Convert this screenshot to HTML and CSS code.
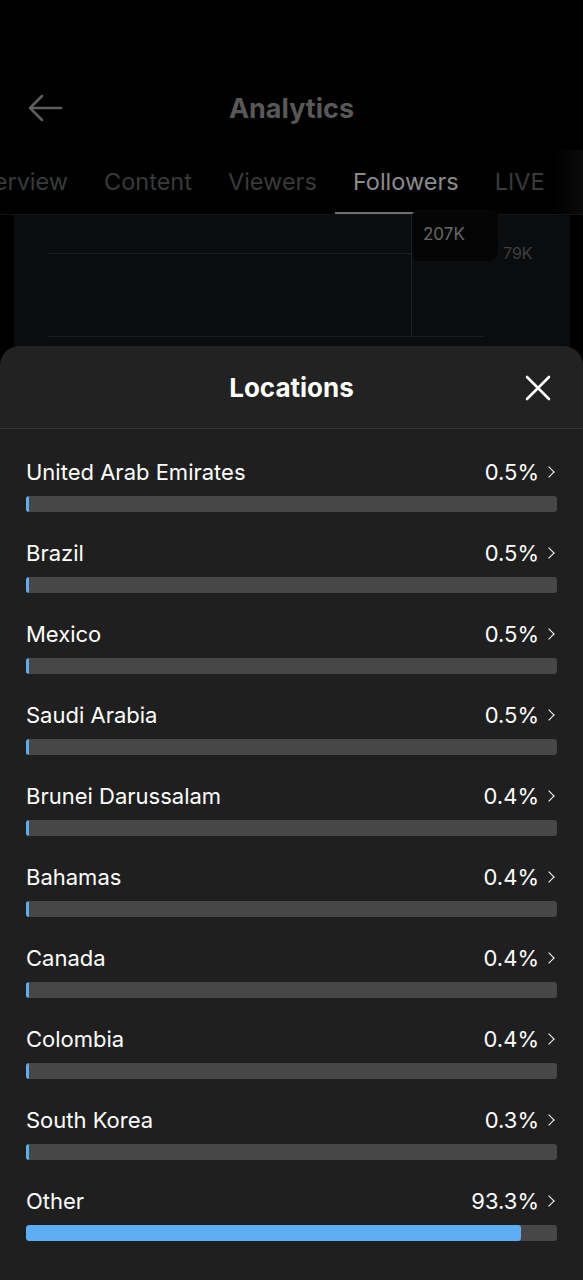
FILE: index.html
```html
<!DOCTYPE html>
<html>
	<head>
		<meta charset="utf-8" />
		<title>Analytics</title>
		<link rel="stylesheet" href="styles.css">
	</head>
	<body>
		<div class="screen">
			<div class="appbar">
				<svg class="back" width="36" height="30" viewBox="0 0 36 30"><path d="M34 15H4M15 3L3 15l12 12" fill="none" stroke="#5e5e5e" stroke-width="2.6" stroke-linecap="round" stroke-linejoin="round"/></svg>
				<h1>Analytics</h1>
			</div>
			<div class="tabs">
				<span class="tab">Overview</span>
				<span class="tab">Content</span>
				<span class="tab">Viewers</span>
				<span class="tab active">Followers</span>
				<span class="tab">LIVE</span>
				<span class="fade"></span>
			</div>
			<div class="card">
				<div class="chart">
					<div class="dots"></div>
					<div class="cursor"></div>
					<div class="tip">207K</div>
					<div class="ylabel">79K</div>
				</div>
			</div>

			<div class="sheet">
				<div class="sheet-head">
					<h2>Locations</h2>
					<svg class="close" width="26" height="26" viewBox="0 0 26 26"><path d="M2 2l22 22M24 2L2 24" stroke="#fff" stroke-width="2.6" stroke-linecap="round"/></svg>
				</div>
				<ul class="list">
					<li><div class="row"><span>United Arab Emirates</span><span class="pct">0.5%<i class="chev"></i></span></div><div class="bar"><div class="fill" style="width:0.6%"></div></div></li>
					<li><div class="row"><span>Brazil</span><span class="pct">0.5%<i class="chev"></i></span></div><div class="bar"><div class="fill" style="width:0.6%"></div></div></li>
					<li><div class="row"><span>Mexico</span><span class="pct">0.5%<i class="chev"></i></span></div><div class="bar"><div class="fill" style="width:0.6%"></div></div></li>
					<li><div class="row"><span>Saudi Arabia</span><span class="pct">0.5%<i class="chev"></i></span></div><div class="bar"><div class="fill" style="width:0.6%"></div></div></li>
					<li><div class="row"><span>Brunei Darussalam</span><span class="pct">0.4%<i class="chev"></i></span></div><div class="bar"><div class="fill" style="width:0.5%"></div></div></li>
					<li><div class="row"><span>Bahamas</span><span class="pct">0.4%<i class="chev"></i></span></div><div class="bar"><div class="fill" style="width:0.5%"></div></div></li>
					<li><div class="row"><span>Canada</span><span class="pct">0.4%<i class="chev"></i></span></div><div class="bar"><div class="fill" style="width:0.5%"></div></div></li>
					<li><div class="row"><span>Colombia</span><span class="pct">0.4%<i class="chev"></i></span></div><div class="bar"><div class="fill" style="width:0.5%"></div></div></li>
					<li><div class="row"><span>South Korea</span><span class="pct">0.3%<i class="chev"></i></span></div><div class="bar"><div class="fill" style="width:0.4%"></div></div></li>
					<li><div class="row"><span>Other</span><span class="pct">93.3%<i class="chev"></i></span></div><div class="bar"><div class="fill" style="width:93.3%"></div></div></li>
				</ul>
			</div>
		</div>
	</body>
</html>
```

FILE: styles.css
```css
html, body {
	margin: 0;
	padding: 0;
	background: #000;
	font-family: Inter, 'Noto Sans', sans-serif;
	color: #fff;
}
.screen {
	position: relative;
	width: 583px;
	height: 1280px;
	overflow: hidden;
	background: #000;
}
.appbar {
	display: flex;
	align-items: center;
	justify-content: center;
	position: relative;
	height: 62px;
	margin-top: 77px;
}
.appbar h1 {
	margin: 0;
	font-size: 27px;
	font-weight: 700;
	color: #585858;
}
.back { position: absolute; left: 27px; top: 16px; }

.tabs {
	display: flex;
	position: relative;
	margin-left: -37px;
	margin-top: 11px;
	padding-top: 2px;
	height: 65px;
	border-bottom: 1px solid #151515;
	box-sizing: border-box;
}
.tab {
	padding: 0 18px;
	font-size: 23.5px;
	line-height: 60px;
	color: #3a3a3a;
	white-space: nowrap;
	border-bottom: 2px solid transparent;
}
.tab:first-child { padding-left: 0; }
.tab.active { color: #8c8c8c; border-bottom-color: #6e6e6e; }
.fade {
	position: absolute;
	right: 0; top: 0; bottom: 0;
	width: 30px;
	background: linear-gradient(to right, #000, #0b0b0b);
}

.card {
	margin: 0 13px 0 14px;
	height: 140px;
	background: #0b0c0d;
	padding: 0 86px 0 34px;
}
.chart {
	position: relative;
	height: 121px;
	border-bottom: 1px solid #1b1d1f;
}
.dots {
	position: absolute;
	left: 0; top: 38px;
	width: 363px;
	border-top: 1px dotted #2a2c2e;
}
.cursor {
	position: absolute;
	left: 363px; top: 0; bottom: 0;
	width: 1px;
	background: #1a2430;
}
.tip {
	position: absolute;
	left: 364px; top: -6px;
	width: 86px; height: 52px;
	box-sizing: border-box;
	padding: 15px 0 0 11px;
	background: #050505;
	border-radius: 8px;
	font-size: 17px;
	color: #676767;
}
.ylabel {
	position: absolute;
	left: 455px; top: 28px;
	font-size: 16px;
	color: #3f3f3f;
}

.sheet {
	position: absolute;
	left: 0; right: 0; top: 346px; bottom: 0;
	background: #1f1f1f;
	border-radius: 20px 20px 0 0;
}
.sheet-head {
	position: relative;
	height: 82px;
	display: flex;
	align-items: center;
	justify-content: center;
	border-bottom: 1px solid #363636;
	background: #222;
	border-radius: 20px 20px 0 0;
}
.sheet-head h2 {
	margin: 0;
	font-size: 26px;
	font-weight: 700;
}
.close { position: absolute; right: 32px; top: 29px; }

.list {
	list-style: none;
	margin: 0;
	padding: 30px 26px 0;
}
.list li { margin-bottom: 28px; }
.row {
	display: flex;
	justify-content: space-between;
	font-size: 22px;
	line-height: 26px;
	height: 26px;
	margin-bottom: 11px;
}
.pct { display: flex; align-items: center; }
.chev {
	display: inline-block;
	width: 7px; height: 7px;
	margin: 0 4px 0 6px;
	border-top: 1.6px solid #fff;
	border-right: 1.6px solid #fff;
	transform: rotate(45deg);
}
.bar {
	height: 16px;
	background: #474747;
	border-radius: 3px;
	overflow: hidden;
}
.fill {
	height: 100%;
	min-width: 3px;
	background: #5eaef6;
	border-radius: 3px;
}
```
